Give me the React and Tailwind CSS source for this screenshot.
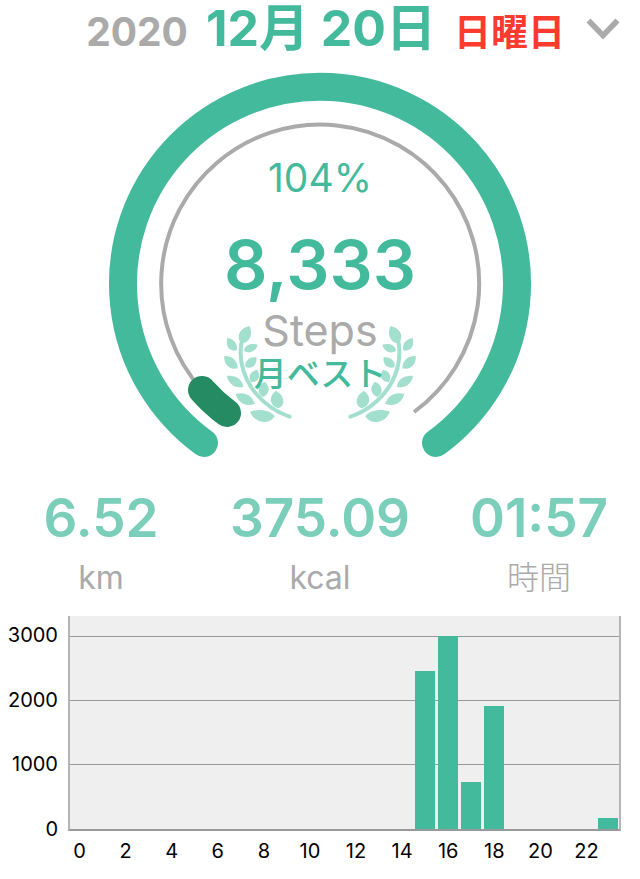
import React from "react";

const STEPS_BY_HOUR = [
  0, 0, 0, 0, 0, 0, 0, 0, 0, 0, 0, 0, 0, 0, 0, 2480, 3025, 730, 1925, 0, 0, 0, 0, 175,
];
const AXIS_MAX = 3336;
const TICKS = [3000, 2000, 1000, 0];

const STATS = [
  { value: "6.52", unit: "km", weight: "font-normal" },
  { value: "375.09", unit: "kcal", weight: "font-normal" },
  { value: "01:57", unit: "時間", weight: "font-light" },
];

function Branch() {
  return (
    <g fill="#a2dfcc">
      <path
        d="M96 88C86 135 94 185 124 232C150 270 190 303 239 320"
        fill="none"
        stroke="#a2dfcc"
        strokeWidth="12"
        strokeLinecap="round"
      />
      <path d="M118 48C126 64 126 84 108 97C99 102 90 97 87 88C82 68 98 52 118 48Z" />
      <path d="M53 83C72 88 85 102 80 121C58 125 44 107 53 83Z" />
      <path d="M143 104C138 124 117 134 102 122C104 104 124 98 143 104Z" />
      <path d="M43 138C65 137 83 151 83 175C59 181 40 163 43 138Z" />
      <path d="M139 142C143 162 127 178 107 172C102 153 119 139 139 142Z" />
      <path d="M51 198C75 195 95 206 100 230C76 237 55 222 51 198Z" />
      <path d="M141 180C155 199 145 215 124 217C113 200 121 183 141 180Z" />
      <path d="M77 252C102 245 126 255 134 281C109 292 84 279 77 252Z" />
      <path d="M165 215C183 232 178 253 158 261C138 248 143 224 165 215Z" />
      <path d="M120 305C148 295 181 301 194 319C179 345 137 343 120 305Z" />
      <path d="M198 242C226 258 226 286 205 295C177 286 175 260 198 242Z" />
    </g>
  );
}

function Gauge() {
  return (
    <section className="grid justify-items-center" aria-label="歩数">
      <svg
        className="col-start-1 row-start-1 h-[410px] w-[440px] max-w-full"
        viewBox="100 60 440 410"
        fill="none"
        aria-hidden="true"
      >
        <path
          d="M204 443A197 197 0 1 1 436 443"
          stroke="#44ba9c"
          strokeWidth="28"
          strokeLinecap="round"
        />
        <path d="M202 390A159 159 0 1 1 414 412" stroke="#aaaaaa" strokeWidth="4" />
        <path
          d="M202 390A159 159 0 0 0 227 413"
          stroke="#258b63"
          strokeWidth="28"
          strokeLinecap="round"
        />
        <g transform="translate(210 310) scale(.33333)">
          <Branch />
        </g>
        <g transform="translate(430 310) scale(-.33333 .33333)">
          <Branch />
        </g>
      </svg>
      <div className="z-10 col-start-1 row-start-1 flex flex-col items-center pt-[98px] text-[#44ba9c]">
        <p className="text-[39px] leading-10">104%</p>
        <p className="mt-8 text-[68px] leading-[68px] font-semibold">8,333</p>
        <p className="mt-2 text-[43px] leading-[48px] text-[#aaaaaa]">Steps</p>
        <p className="text-[33px] leading-10 font-medium">月ベスト</p>
      </div>
    </section>
  );
}

function HourlyChart() {
  return (
    <section className="mt-[18px] flex pr-[19px] text-xl leading-7 text-black" aria-label="時間ごとの歩数">
      <div className="flex h-[227px] w-[68px] shrink-0 flex-col justify-between pt-[5px] pr-2.5 text-right">
        {TICKS.map((t) => (
          <span key={t}>{t}</span>
        ))}
      </div>
      <div className="min-w-0 flex-1">
        <div className="relative h-[215px] border-x-2 border-b-2 border-[#b5b5b5] border-b-[#999999] bg-[#efefef]">
          {TICKS.slice(0, 3).map((t) => (
            <div
              key={t}
              className="absolute inset-x-0 h-px bg-[#999999]"
              style={{ bottom: `${(t / AXIS_MAX) * 100}%` }}
            />
          ))}
          <div className="relative grid h-full grid-cols-24 items-end">
            {STEPS_BY_HOUR.map((steps, hour) => (
              <div
                key={hour}
                className="ml-0.5 mr-px bg-[#44ba9c]"
                style={{ height: `${(steps / AXIS_MAX) * 100}%` }}
              />
            ))}
          </div>
        </div>
        <div className="mt-1.5 grid grid-cols-24">
          {STEPS_BY_HOUR.map((_, hour) => (
            <span key={hour} className="flex justify-center">
              {hour % 2 === 0 ? hour : ""}
            </span>
          ))}
        </div>
      </div>
    </section>
  );
}

export default function App() {
  return (
    <main className="min-h-screen bg-white font-['Inter','Noto_Sans_CJK_JP',sans-serif]">
      <header className="flex h-[60px] items-center justify-end gap-5 pr-[19px]">
        <h1 className="flex items-baseline gap-[18px] font-bold whitespace-nowrap">
          <span className="text-[39px] leading-[60px] text-[#aaaaaa]">2020</span>
          <span className="text-[50px] leading-[60px] text-[#44ba9c]">12月 20日</span>
          <span className="text-[37px] leading-[60px] text-[#fc3b30]">日曜日</span>
        </h1>
        <button type="button" aria-label="日付を選択">
          <svg width="36" height="24" viewBox="0 0 36 24" fill="none" aria-hidden="true">
            <path d="M3.5 2.5L18 17.5L32.5 2.5" stroke="#aaaaaa" strokeWidth="5.5" />
          </svg>
        </button>
      </header>

      <Gauge />

      <dl className="grid grid-cols-[202fr_236fr_202fr] pt-5 text-center">
        {STATS.map((s) => (
          <div key={s.unit} className="flex flex-col items-center">
            <dd className="text-[53px] leading-[56px] font-semibold text-[#7aceba]">{s.value}</dd>
            <dt className={`order-last mt-3 text-[32px] leading-10 text-[#aaaaaa] ${s.weight}`}>
              {s.unit}
            </dt>
          </div>
        ))}
      </dl>

      <HourlyChart />
    </main>
  );
}
